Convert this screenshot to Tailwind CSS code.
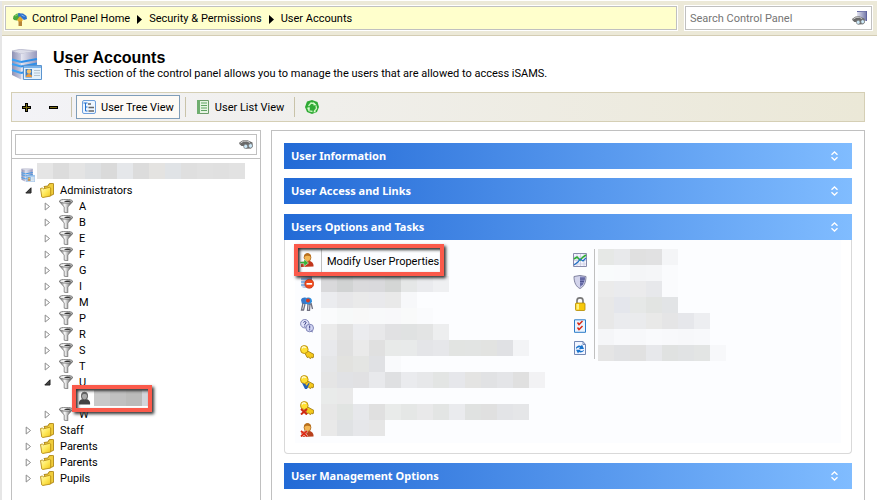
<!DOCTYPE html>
<html lang="en">
<head>
<meta charset="utf-8">
<title>User Accounts</title>
<script src="https://cdn.jsdelivr.net/npm/@tailwindcss/browser@4"></script>
</head>
<body class="bg-white font-['Roboto','Noto_Sans',sans-serif] text-[11px] leading-4 text-black">
<svg width="0" height="0" class="absolute" aria-hidden="true">
  <defs>
    <linearGradient id="metal" x1="0" x2="1"><stop offset="0" stop-color="#555"/><stop offset=".4" stop-color="#fafafa"/><stop offset=".6" stop-color="#bbb"/><stop offset="1" stop-color="#333"/></linearGradient>
    <linearGradient id="gold" x1="0" y1="0" x2="1" y2="1"><stop offset="0" stop-color="#fffcc0"/><stop offset=".5" stop-color="#ffe95c"/><stop offset="1" stop-color="#efc41a"/></linearGradient>
    <linearGradient id="steel" x1="0" x2="1"><stop offset="0" stop-color="#e3e4f0"/><stop offset="1" stop-color="#7378a8"/></linearGradient>
    <linearGradient id="side" x1="0" x2="1"><stop offset="0" stop-color="#e6e7f1"/><stop offset="1" stop-color="#9698bd"/></linearGradient>
    <linearGradient id="front" x1="0" x2="1"><stop offset="0" stop-color="#8d90b4"/><stop offset="1" stop-color="#c9cbdf"/></linearGradient>
    <symbol id="i-funnel" viewBox="0 0 14 14"><path d="M.3 2.500 5.200 8v5.200l3.600.6V8l5-5.500z" fill="url(#metal)" stroke="#666" stroke-width=".7"/><ellipse cx="7" cy="2.200" rx="6.600" ry="1.900" fill="#f0f0f0" stroke="#666" stroke-width=".8"/><path d="M5 2.400c2-1 6-1 7.500-.2-1.500 1-5 1-7.500.2" fill="#333"/></symbol>
    <symbol id="i-folder" viewBox="0 0 14 15"><path d="M4 3.500 8 3l1-2.200 4-.6.6.6v10.500L9.500 13z" fill="#f0cd3c" stroke="#a87f10" stroke-width=".9"/><path d="M.5 5.500 2.300 5l1 .8 6.500-1.500.9.700V13l-8 1.500-.9-.5z" fill="url(#gold)" stroke="#b88d14" stroke-width=".9"/></symbol>
    <symbol id="i-server" viewBox="0 0 31 31"><path d="M1 2 9 .3 26 2 10 5z" fill="#dcdde9" stroke="#a3a5bd" stroke-width=".6"/><path d="M10 5 26 2v24l-13 4.500h-3z" fill="url(#side)"/><path d="M1 2.200 10 5v25.500L1 26z" fill="url(#front)"/><path d="m10 13 16-3M10 17.500l16-3M10 24l16-4" stroke="#2f8fe8" stroke-width="1.900"/><path d="m1 10.500 9 2.500M1 15l9 2.500M1 21l9 3" stroke="#3aa2f6" stroke-width="1.900"/><path d="M12.500 16.500h18v14h-18z" fill="#e3f1fc" stroke="#5b94cf"/><path d="M13 17h17v2H13z" fill="#7ab4ec"/><path d="M14.500 20h6.500v8.500h-6.500z" fill="#3b7cc4"/><circle cx="18" cy="22.500" r="2.200" fill="#f4c06a"/><path d="M15 28c0-4 6-4 6 0z" fill="#f29a36"/><path d="M23 21.500h6M23 24h6M23 26.500h6" stroke="#b3c2cf"/></symbol>
    <symbol id="i-binoc" viewBox="0 0 14 9"><path d="M.3 2.500 4 .3 8 0l5.500 2.500.3 4L12 8.500 7 8.700 4.500 6 2.500 6 .3 4z" fill="#6a6a6a"/><path d="M1.500 3 4.500 1.200 8 1l3 1.500" stroke="#d8d8d8" fill="none"/><ellipse cx="6.700" cy="6.400" rx="2" ry="2.200" fill="#cdeafa" stroke="#777" stroke-width=".7"/><ellipse cx="11.500" cy="5.800" rx="2" ry="2.200" fill="#cdeafa" stroke="#777" stroke-width=".7"/></symbol>
    <symbol id="i-user" viewBox="0 0 14 14"><path d="M1 14c-.5-4.500 1.500-6.500 5.500-6.500S14 9.500 13.500 13.500z" fill="currentColor"/><ellipse cx="7.500" cy="4.500" rx="3.400" ry="4" fill="#f3b654" stroke="#a8631b" stroke-width=".8"/><path d="M4 4c0-5 7-5 7 0-2-1.500-4-2-7 0" fill="#b86f1e"/></symbol>
    <symbol id="i-key" viewBox="0 0 14 14"><path d="m6 5 8 4.500-1 3.500-1.500-.8-1 1.600-1.800-1.600-1.500.3L5 8.500z" fill="#f5c91c" stroke="#9b7406" stroke-width=".8"/><ellipse cx="4.300" cy="4.500" rx="3.800" ry="4" fill="#ffe034" stroke="#b58a0c" stroke-width=".9"/><path d="M2 3.500c.5-2 3-2 3.500-.5" fill="none" stroke="#fffbe0" stroke-width="1.300"/></symbol>
    <symbol id="i-updown" viewBox="0 0 7 10"><path d="M.5 3.700 3.500.9l3 2.800M.5 6.300l3 2.800 3-2.800" fill="none" stroke="#fff" stroke-width="1.300"/></symbol>
    <symbol id="i-closed" viewBox="0 0 6 9"><path d="M.7 1v7L5 4.500z" fill="#fff" stroke="#8c8c8c"/></symbol>
    <symbol id="i-open" viewBox="0 0 7 7"><path d="M6 .8V6H.8z" fill="#444" stroke="#222"/></symbol>
  </defs>
</svg>

<div class="min-h-screen border-l-2 border-[#e6e6e6]">
  <header class="mt-px flex items-center gap-[6px] border-b border-[#d4cdb4] bg-[#ece9d8] py-1 pr-1 pl-[2px]">
    <nav aria-label="Breadcrumb" class="flex h-[26px] flex-1 items-center border border-white">
      <div class="flex h-full flex-1 items-center border border-[#c0c0c0] bg-[#ffffcc] pt-[2px] pl-[7px]">
      <svg class="mr-[5px] h-[13px] w-[14px]" viewBox="0 0 14 13" aria-hidden="true"><path d="M5.500 5h3.500v8H5.500z" fill="#b58538"/><path d="M0 5.500.5 3 3.500.8 7 .3v5L4 7.500 1 7z" fill="#4aa83a"/><path d="M5 .2 10 .5 13.500 3 14 6l-3 1-3-2.500L5.500 4z" fill="#2e72cc"/><path d="m2 3 3-1.500" stroke="#8fd46e"/><path d="m8.500 2 3 1.500" stroke="#7fb4f0"/><path d="m4 7 3-4 3 4-1.500 1.500h-3z" fill="#e1a830"/></svg>
      <a href="#">Control Panel Home</a>
      <svg class="mx-[7px] h-[9px] w-[5px]" viewBox="0 0 5 9" aria-hidden="true"><path d="m0 0 5 4.500L0 9z"/></svg>
      <a href="#">Security &amp; Permissions</a>
      <svg class="mx-[7px] h-[9px] w-[5px]" viewBox="0 0 5 9" aria-hidden="true"><path d="m0 0 5 4.500L0 9z"/></svg>
      <a href="#">User Accounts</a>
      </div>
    </nav>
    <form class="h-[26px] w-[189px] border border-white">
      <div class="flex h-full items-center border border-[#c0c0c0] bg-white pr-1 pl-1">
      <input type="search" aria-label="Search Control Panel" placeholder="Search Control Panel" class="min-w-0 flex-1 pt-[2px] outline-none placeholder:text-[#757575]">
      <button type="button" aria-label="Search"><svg class="block h-[14px] w-[15px]" viewBox="0 0 15 14"><path d="M5 .5 14.500 0v10L5 8z" fill="url(#steel)"/><path d="M5 .5 14.500 0v10" fill="none" stroke="#6064a0"/><use href="#i-binoc" x="0" y="5" width="13" height="9"/></svg></button>
      </div>
    </form>
  </header>

  <main class="pr-3 pl-[9px]">
    <div class="flex pt-[13px]">
      <svg class="h-[31px] w-[31px]" aria-hidden="true"><use href="#i-server"/></svg>
      <div class="pt-px pl-[11px]">
        <h1 class="font-['Liberation_Sans',sans-serif] text-base leading-4 font-bold">User Accounts</h1>
        <p class="pl-[11px]">This section of the control panel allows you to manage the users that are allowed to access iSAMS.</p>
      </div>
    </div>

    <div role="toolbar" aria-label="Tree tools" class="mt-[10px] flex h-[30px] items-center border border-[#d5cfb5] bg-linear-to-r from-[#f3f3f7] to-[#ebe8d7]">
      <button type="button" aria-label="Expand all" class="ml-[10px]"><svg class="block h-[9px] w-[9px]" viewBox="0 0 9 9"><path d="M3 0h3v3h3v3H6v3H3V6H0V3h3z"/><path d="M4 1h1v3h3v1H5v3H4V5H1V4h3z" fill="#7a6a10"/></svg></button>
      <button type="button" aria-label="Collapse all" class="ml-[18px]"><svg class="block h-[3px] w-[9px]" viewBox="0 0 9 3"><path d="M0 0h9v3H0z"/><path d="M1 1h7v1H1z" fill="#7a6a10"/></svg></button>
      <span class="ml-[13px] h-5 w-px bg-[#c9c3a9]"></span>
      <button type="button" aria-pressed="true" class="ml-1 flex h-6 items-center gap-[5px] border border-[#7f9db9] bg-[#fdfaf6] px-[5px]">
        <svg class="h-[14px] w-[14px]" viewBox="0 0 14 14" aria-hidden="true"><rect x=".5" y=".5" width="13" height="13" rx="1.500" fill="#eef6ff" stroke="#6fa0dc"/><path d="M1.500 3h4M3.500 3v8h2M3.500 7h2" stroke="#2170cf" fill="none"/><path d="M6 4h3M6.500 7.500H12M6.500 11H12" stroke="#666" stroke-width="1.500"/></svg>
        <span class="pt-[2px]">User Tree View</span>
      </button>
      <span class="ml-[5px] h-5 w-px bg-[#c9c3a9]"></span>
      <button type="button" class="ml-[5px] flex h-6 items-center gap-[5px] px-[5px]">
        <svg class="h-[14px] w-[14px]" viewBox="0 0 14 14" aria-hidden="true"><path d="M1.500.5h11v13h-11z" fill="#e6f4e4" stroke="#6c9c6a"/><path d="M1 0h3v14H1z" fill="#6fae70"/><path d="M5 3h6M5 5.500h6M5 8h6M5 10.500h6" stroke="#5fa463"/></svg>
        <span class="pt-[2px]">User List View</span>
      </button>
      <span class="ml-[5px] h-5 w-px bg-[#c9c3a9]"></span>
      <button type="button" aria-label="Refresh" class="ml-[10px]"><svg class="block h-[14px] w-[14px]" viewBox="0 0 14 14"><path d="M2 1.500 7 0l5.500 2L14 7l-2 5-5 2-5-2-2-5z" fill="#2faa35"/><path d="M3.500 6 6 3l3 .5M11 5.500l.5 3-2 2.500M7.500 11.500l-3.500-.7L3 8.500" stroke="#c9f5bd" stroke-width="1.300" fill="none"/><path d="M8.500 2v3.500L11.500 5zM11 12l-2.500.5L9 10zM1.500 8l3-1 .5 3z" fill="#d9ffd0"/></svg></button>
    </div>

    <div class="mt-2 flex items-stretch gap-[10px]">
      <aside class="w-[250px] shrink-0 border border-b-0 border-[#c0c0c0]">
        <form class="border-b border-[#c0c0c0] p-[3px]">
          <div class="flex h-[21px] items-center border border-[#c0c0c0] px-[3px]">
            <input type="search" aria-label="Search users" class="min-w-0 flex-1 outline-none">
            <button type="button" aria-label="Find"><svg class="block h-[9px] w-[14px]"><use href="#i-binoc"/></svg></button>
          </div>
        </form>
        <div class="pt-1 pb-3">
          <div class="flex h-[19px] items-start pl-[9px]">
            <svg class="mt-[5px] h-[14px] w-[14px]" aria-hidden="true"><use href="#i-server"/></svg>
            <svg class="ml-[2px]" data-cell="16" data-mosaic="e5e5e5 dcdcdc e4e4e4 dee0e2 dadada e5e7ea dcdcdc e4e3e1 e0e3e6 dfdfdf e1e1e1 e0e0e0 e2e2e2"></svg>
          </div>
          <ul id="tree"></ul>
        </div>
      </aside>

      <section class="min-w-0 flex-1 border border-b-0 border-[#c0c0c0] px-3 pt-3 pb-4">
        <button type="button" class="flex h-[26px] w-full items-center justify-between bg-linear-to-r from-[#226ad6] to-[#80bcff] pr-[14px] pl-[7px] font-['Noto_Sans',sans-serif] font-bold text-white">User Information<svg class="h-[10px] w-[7px]" aria-hidden="true"><use href="#i-updown"/></svg></button>
        <button type="button" class="mt-[9px] flex h-[26px] w-full items-center justify-between bg-linear-to-r from-[#226ad6] to-[#80bcff] pr-[14px] pl-[7px] font-['Noto_Sans',sans-serif] font-bold text-white">User Access and Links<svg class="h-[10px] w-[7px]" aria-hidden="true"><use href="#i-updown"/></svg></button>
        <button type="button" class="mt-[10px] flex h-[26px] w-full items-center justify-between bg-linear-to-r from-[#226ad6] to-[#80bcff] pr-[14px] pl-[7px] font-['Noto_Sans',sans-serif] font-bold text-white">Users Options and Tasks<svg class="h-[10px] w-[7px]" aria-hidden="true"><use href="#i-updown"/></svg></button>
        <div class="rounded-b-[4px] border border-t-0 border-[#d9d9d9] px-[10px] pb-[10px]">
          <div class="flex bg-[#fcfdff] pt-[9px]">
            <div class="relative flex w-1/2 pl-[5px]">
              <ul class="w-[14px]">
                <li class="flex h-[22px] items-center"><svg class="h-[14px] w-[14px] text-[#c0361c]" viewBox="0 0 14 14" aria-hidden="true"><use href="#i-user" width="14" height="14"/><path d="M0 8.500h4V6l4.500 4L4 13.500v-2.700L0 10.500z" fill="#35b538" stroke="#fff" stroke-width=".5"/></svg></li>
                <li class="flex h-[22px] items-center"><svg class="h-[14px] w-[14px]" viewBox="0 0 14 14" aria-hidden="true"><path d="M1 1.500 5 .5l7 1V13H3l-2-2z" fill="url(#steel)"/><path d="M1 4h11M1 7h5M1 10h5" stroke="#3b8fdf"/><circle cx="9.300" cy="8.800" r="4.500" fill="#ef4a1c" stroke="#c42c0a" stroke-width=".6"/><path d="M6.500 8h5.600v1.700H6.500z" fill="#fff"/></svg></li>
                <li class="flex h-[22px] items-center"><svg class="h-[14px] w-[14px]" viewBox="0 0 14 14" aria-hidden="true"><path d="M1 3c1-3 5-3 6-1l-1 5H2z" fill="#3478cb"/><path d="M5 1.500c4-2 7-.5 7 3L10 8 6 7z" fill="#2e8cdc"/><circle cx="8" cy="3.600" r="2" fill="#d93a20"/><path d="m3 6-1.500 7h2L5 7m3 0-.5 6.500h2L10 7m1-1 1.500 6" stroke="#707080" stroke-width="1.300" fill="none"/></svg></li>
                <li class="flex h-[22px] items-center"><svg class="h-[14px] w-[14px]" viewBox="0 0 14 14" aria-hidden="true"><circle cx="4.800" cy="4.700" r="4.200" fill="#e0e2f8" stroke="#8186b8"/><path d="M3.500 3.500C4 2 6.500 2.500 6 4L4.800 5v.8m0 .8v1" stroke="#333a80" fill="none"/><circle cx="9.700" cy="9" r="3.800" fill="#d3d6f4" stroke="#8186b8"/><path d="M9.700 6.500v3m0 .8v1" stroke="#333a80"/><path d="m10 12.500 3 1-1-2.500z" fill="#8186b8"/></svg></li>
                <li class="flex h-[30px] items-center"><svg class="h-[14px] w-[14px]" aria-hidden="true"><use href="#i-key"/></svg></li>
                <li class="flex h-[30px] items-center"><svg class="h-[14px] w-[14px]" viewBox="0 0 14 14" aria-hidden="true"><use href="#i-key" width="14" height="14"/><path d="m2 8 3 1 1.500 2L9 7.500l.5 1L7 14H5z" fill="#2460b8"/></svg></li>
                <li class="flex h-[22px] items-center"><svg class="h-[14px] w-[14px]" viewBox="0 0 14 14" aria-hidden="true"><use href="#i-key" width="14" height="14"/><path d="m1 8 6 5.500m0-5.500-6 5.500" stroke="#cf2a12" stroke-width="2"/></svg></li>
                <li class="flex h-[22px] items-center"><svg class="h-[14px] w-[14px] text-[#b8401c]" viewBox="0 0 14 14" aria-hidden="true"><use href="#i-user" width="14" height="14"/><path d="m1 8 6 5.500m0-5.500-6 5.500" stroke="#fff" stroke-width="2.600"/><path d="m1 8 6 5.500m0-5.500-6 5.500" stroke="#dc2a14" stroke-width="1.800"/></svg></li>
              </ul>
              <div class="ml-[7px] pb-[7px]">
                <a href="#" class="flex h-[27px] items-center border-l border-[#c0c0c0] pb-[2px] pl-[5px]">Modify User Properties</a>
                <svg data-cell="16" data-mosaic="d9d9db d1d3d3 dadadc d9d9dc d4d6d5 e5e7e7 eaebee eff0f2|ebecef e7e7e9 eaeaea e9e9ec e9e9e9 f7f8fa|fafbfc f7f9f9 f8f8f8 f8f9fa f8f8fa f9fafa fafbfd|ebebeb e2e2e2 ebecef e8e8ea e1e1e3 e0e2e2 e3e4e4 edeeef|e8e9ec e0e0e0 eaeaea e0e0e0 e8eae9 e8eaea e4e5e8 e6e7ea e2e4e2 e2e4e3 e2e3e1 e0e1e4 f3f4f6|e5e6e8 e2e2df e4e5e3 e0e1e4 f9fafc|e5e5e5 e1e2e5 e1e1e3 e8e9ec dfe0e2 eaebee e7e8ea e3e5e4 e6e7eb e4e4e3 e1e2e4 e4e5e8 e0e0e0 f2f2f4|e9ebea e9e9e9|e7e7e7 e1e4e2 e7e8eb e0e0e0 e9ebea e5e7e6 e9e9ea e3e5e4 eaebee e0e2e1 e0e0e0 e3e4e7 e5e6e8|e9e9e9 e0e2e4 e6e7ea e6e6e6"></svg>
              </div>
              <div class="pointer-events-none absolute -top-[5px] -left-px h-8 w-[150px] border-4 border-[#fb5a4b] shadow-[2px_2px_3px_#333,inset_2px_2px_3px_#333]"></div>
            </div>
            <div class="flex w-1/2 self-start pl-[5px]">
              <ul class="w-[14px]">
                <li class="flex h-[22px] items-center"><svg class="h-[14px] w-[14px]" viewBox="0 0 14 14" aria-hidden="true"><path d="M.5.500h13v13H.5z" fill="#f4f5ff" stroke="#8a8cac"/><path d="M4 1v12M7.500 1v12M11 1v12M1 4h12M1 7.500h12M1 11h12" stroke="#c5c7dc" stroke-width=".7"/><path d="m1 6 3-2 3 3 3-3 3-2" stroke="#2fae32" stroke-width="1.600" fill="none"/><path d="m1 12 4-3 2-3 3 2 3-3" stroke="#2070c4" stroke-width="1.200" fill="none"/></svg></li>
                <li class="flex h-[22px] items-center"><svg class="h-[14px] w-[14px]" viewBox="0 0 14 14" aria-hidden="true"><path d="M1 1.500 7 .5l6 1C13 8 10.500 12 7 13.500 3.500 12 1 8 1 1.500z" fill="#d3d4ec" stroke="#80829f"/><path d="M7 1.500 12 2c0 5-2 8.500-5 10z" fill="#7b7fb8"/><path d="M7 4h5M7 6.500h4M7 9h3" stroke="#444a88" stroke-width=".8"/></svg></li>
                <li class="flex h-[22px] items-center"><svg class="h-[14px] w-[14px]" viewBox="0 0 14 14" aria-hidden="true"><path d="M4 7V3.500C4 0 10 0 10 3.500V7" fill="none" stroke="#777" stroke-width="1.600"/><rect x="2.500" y="6" width="9.500" height="7.500" rx="1" fill="#f7c90c" stroke="#b38a00" stroke-width=".8"/><path d="M3.500 7h2.500v5.500H3.500z" fill="#fff080"/></svg></li>
                <li class="flex h-[22px] items-center"><svg class="h-[14px] w-[14px]" viewBox="0 0 14 14" aria-hidden="true"><path d="M1.500.8h11v12.500h-11z" fill="#eaf4ff" stroke="#2b7cc9"/><path d="m4.500 3.500 1.500 2L9.500 2m-5 6.500 1.500 2L9.500 7" stroke="#d82c18" stroke-width="1.500" fill="none"/></svg></li>
                <li class="flex h-[22px] items-center"><svg class="h-[14px] w-[14px]" viewBox="0 0 14 14" aria-hidden="true"><path d="M1.500.500H10l2.500 3v10h-11z" fill="#f2f5ff" stroke="#7388b4"/><path d="M10 .5v3h2.500" fill="none" stroke="#7388b4"/><path d="M3 6.500C5 4 7 4.500 8 5l1-1.500L11 8H6l1-1.500C5.500 6 4.500 7 3 8zM11 9.500c-2 2.500-4 2-5 1.500L5 12.500 3 8.800h5l-1 1c1.500.5 3 0 4-1z" fill="#1a74cc"/></svg></li>
              </ul>
              <div class="ml-[7px] h-[110px] border-l border-[#c0c0c0] pl-[3px]">
                <svg data-cell="16" data-mosaic="e6e8e6 e8e9eb e0e0e0 e1e1e2 f4f5f7|f9fbfc f9fafc f4f5f7 f5f6f8 fafbfd|ebebeb eaebee ebebec e7e8eb fafbfd|e8e8e8 e4e6ec e6e8e7 e2e4e2 e2e4e6|e8e8e8 eaebee eaebed e9e9e8 e5e5e6 e6e7eb edeef1|f5f6f8 f8f9fb f7f8fa f9fafc f8f9fb f7f8fa f8f9fb|e5e5e5 e1e2e4 e1e1e1 e7e8eb e0e2e1 e1e3e4 e3e5e4 f7f8fa"></svg>
              </div>
            </div>
          </div>
        </div>
        <button type="button" class="mt-[9px] flex h-[26px] w-full items-center justify-between bg-linear-to-r from-[#226ad6] to-[#80bcff] pr-[14px] pl-[7px] font-['Noto_Sans',sans-serif] font-bold text-white">User Management Options<svg class="h-[10px] w-[7px]" aria-hidden="true"><use href="#i-updown"/></svg></button>
      </section>
    </div>
  </main>
</div>

<template id="folder-row"><li class="flex h-4 items-center pl-[13px]"><button type="button" class="w-[15px]" aria-label="Toggle"><svg class="block h-[9px] w-[7px]"><use/></svg></button><svg class="h-[15px] w-[14px]" aria-hidden="true"><use href="#i-folder"/></svg><a href="#" class="pt-[2px] pl-[6px]"></a></li></template>
<template id="letter-row"><li class="flex h-4 items-center pl-[32px]"><button type="button" class="w-[15px]" aria-label="Toggle"><svg class="block h-[9px] w-[7px]"><use/></svg></button><svg class="h-[14px] w-[14px]" aria-hidden="true"><use href="#i-funnel"/></svg><a href="#" class="pt-[2px] pl-[6px]"></a></li></template>
<template id="user-row"><li class="relative flex h-4 items-center pl-[66px]"><svg class="h-[14px] w-[13px]" viewBox="0 0 14 14" aria-hidden="true"><path d="M1 14c-.5-4 1.500-6 6-6s6.500 2 6 6z" fill="#444"/><ellipse cx="7" cy="5" rx="3.300" ry="4" fill="#aaa" stroke="#555"/><path d="M3.500 4c0-5 7-5 7 0-2-1.500-4-2-7 0" fill="#666"/></svg><svg class="ml-[3px] w-[54px]" data-cell="16" data-mosaic="c9c9c9 c0c0c0 bbbbba d3d5da"></svg><div class="pointer-events-none absolute -top-[5px] left-[60px] h-[27px] w-[80px] border-4 border-[#fb5a4b] shadow-[2px_2px_3px_#333,inset_2px_2px_3px_#333]"></div></li></template>
<script>
const tree = document.getElementById('tree');
function addRow(kind, label, open) {
  const row = document.getElementById(kind + '-row').content.cloneNode(true);
  if (label) {
    row.querySelector('button use').setAttribute('href', open ? '#i-open' : '#i-closed');
    row.querySelector('a').textContent = label;
  }
  tree.append(row);
}
addRow('folder', 'Administrators', true);
for (const l of 'ABEFGIMPRSTU') addRow('letter', l, l === 'U');
addRow('user');
addRow('letter', 'W');
for (const l of ['Staff', 'Parents', 'Parents', 'Pupils']) addRow('folder', l);

// Redacted labels: rows separated by "|", one colour per cell.
for (const svg of document.querySelectorAll('[data-mosaic]')) {
  const s = +svg.dataset.cell, rows = svg.dataset.mosaic.split('|').map(r => r.split(' '));
  svg.setAttribute('width', s * Math.max(...rows.map(r => r.length)));
  svg.setAttribute('height', s * rows.length);
  svg.setAttribute('shape-rendering', 'crispEdges');
  svg.innerHTML = rows.map((r, y) => r.map((c, x) => `<rect x="${x * s}" y="${y * s}" width="${s}" height="${s}" fill="#${c}"/>`).join('')).join('');
}
</script>
</body>
</html>
